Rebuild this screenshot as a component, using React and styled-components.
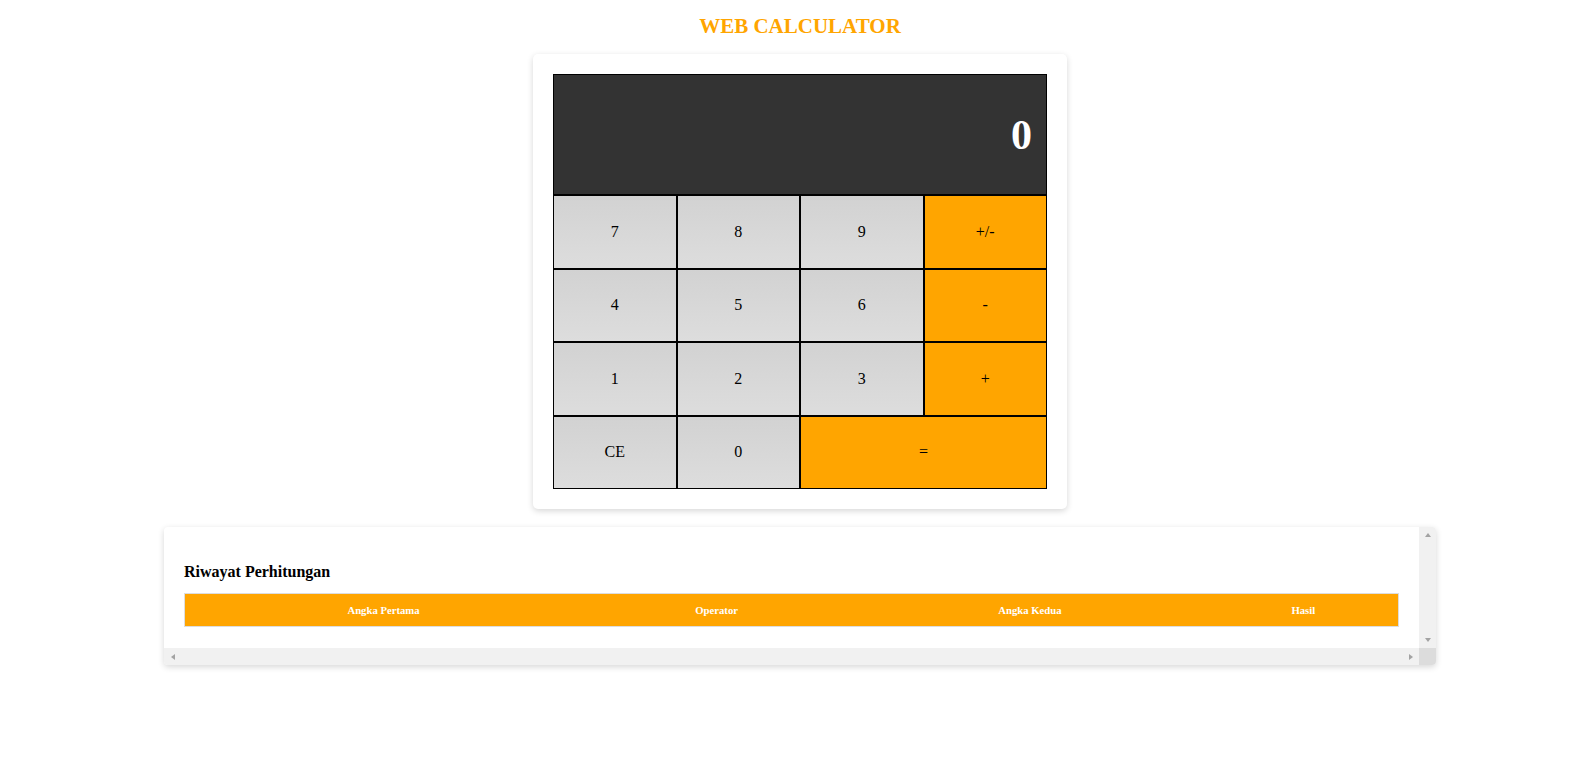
import React, { useState } from "react";
import styled, { createGlobalStyle, css } from "styled-components";

const GlobalStyle = createGlobalStyle`
  html, body {
    margin: 0;
    padding: 0;
    background: #ffffff;
  }
  body {
    font-family: "Liberation Serif", "Times New Roman", serif;
    color: #000;
  }
`;

const ARROW = "#a3a3a3";

const Page = styled.div`
  padding: 14px 8px 40px 27px;
  display: flex;
  flex-direction: column;
  align-items: center;
`;

const Title = styled.h1`
  margin: 0;
  font-size: 21px;
  line-height: 24px;
  font-weight: bold;
  color: #ffa500;
  text-align: center;
`;

const Card = styled.div`
  margin-top: 16px;
  width: 534px;
  box-sizing: border-box;
  padding: 20px;
  background: #fff;
  border-radius: 5px;
  box-shadow: 0 2px 6px rgba(0, 0, 0, 0.16);
`;

const Display = styled.div`
  height: 121px;
  box-sizing: border-box;
  border: 1px solid #000;
  background: #333333;
  color: #fff;
  font-size: 42px;
  font-weight: bold;
  display: flex;
  align-items: center;
  justify-content: flex-end;
  padding-right: 14px;
`;

const Keys = styled.div`
  display: grid;
  grid-template-columns: repeat(4, 1fr);
  grid-auto-rows: 73.5px;
`;

const Key = styled.button`
  box-sizing: border-box;
  border: 1px solid #000;
  margin: 0;
  padding: 0;
  font-family: "Liberation Serif", "Times New Roman", serif;
  font-size: 16px;
  color: #000;
  cursor: pointer;
  grid-column: span ${(p) => p.$span || 1};
  background: ${(p) =>
    p.$op ? "#ffa500" : "linear-gradient(to bottom, #d2d2d2, #dddddd)"};
`;

/* History panel: a scroll box drawn as content + classic scrollbars */
const Panel = styled.div`
  margin-top: 18px;
  width: 1272px;
  display: grid;
  grid-template-columns: 1fr 17px;
  grid-template-rows: auto 17px;
  background: #fff;
  border-radius: 4px;
  overflow: hidden;
  box-shadow: 0 2px 6px rgba(0, 0, 0, 0.16);
`;

const PanelBody = styled.div`
  padding: 20px 20px 21px;
  min-width: 0;
`;

const ScrollTrack = styled.div`
  background: #f1f1f1;
  display: flex;
  flex-direction: ${(p) => (p.$vertical ? "column" : "row")};
  justify-content: space-between;
`;

const Corner = styled.div`
  background: #dcdcdc;
`;

const ArrowBtn = styled.div`
  width: 17px;
  height: 17px;
  display: flex;
  align-items: center;
  justify-content: center;

  &::before {
    content: "";
    width: 0;
    height: 0;
    ${(p) =>
      p.$dir === "up" &&
      css`
        border-left: 3.5px solid transparent;
        border-right: 3.5px solid transparent;
        border-bottom: 4px solid ${ARROW};
        margin-top: -1px;
      `}
    ${(p) =>
      p.$dir === "down" &&
      css`
        border-left: 3.5px solid transparent;
        border-right: 3.5px solid transparent;
        border-top: 4px solid ${ARROW};
      `}
    ${(p) =>
      p.$dir === "left" &&
      css`
        border-top: 3.5px solid transparent;
        border-bottom: 3.5px solid transparent;
        border-right: 4px solid ${ARROW};
      `}
    ${(p) =>
      p.$dir === "right" &&
      css`
        border-top: 3.5px solid transparent;
        border-bottom: 3.5px solid transparent;
        border-left: 4px solid ${ARROW};
      `}
  }
`;

const PanelTitle = styled.h3`
  margin: 16px 0 12px;
  font-size: 16px;
  font-weight: bold;
`;

const Table = styled.table`
  width: 100%;
  border-collapse: collapse;
  border: 1px solid #dddddd;
`;

const Th = styled.th`
  background: #ffa500;
  color: #fff;
  font-size: 10.7px;
  font-weight: bold;
  padding: 10px;
  text-align: center;
`;

const rows = [
  [{ l: "7" }, { l: "8" }, { l: "9" }, { l: "+/-", op: true }],
  [{ l: "4" }, { l: "5" }, { l: "6" }, { l: "-", op: true }],
  [{ l: "1" }, { l: "2" }, { l: "3" }, { l: "+", op: true }],
  [{ l: "CE" }, { l: "0" }, { l: "=", op: true, span: 2 }],
];

export default function App() {
  const [value] = useState("0");
  return (
    <>
      <GlobalStyle />
      <Page>
        <Title>WEB CALCULATOR</Title>
        <Card>
          <Display>{value}</Display>
          <Keys>
            {rows.flat().map((k) => (
              <Key key={k.l} $op={k.op} $span={k.span}>
                {k.l}
              </Key>
            ))}
          </Keys>
        </Card>
        <Panel>
          <PanelBody>
            <PanelTitle>Riwayat Perhitungan</PanelTitle>
            <Table>
              <thead>
                <tr>
                  <Th>Angka Pertama</Th>
                  <Th>Operator</Th>
                  <Th>Angka Kedua</Th>
                  <Th>Hasil</Th>
                </tr>
              </thead>
              <tbody />
            </Table>
          </PanelBody>
          <ScrollTrack $vertical>
            <ArrowBtn $dir="up" />
            <ArrowBtn $dir="down" />
          </ScrollTrack>
          <ScrollTrack>
            <ArrowBtn $dir="left" />
            <ArrowBtn $dir="right" />
          </ScrollTrack>
          <Corner />
        </Panel>
      </Page>
    </>
  );
}
